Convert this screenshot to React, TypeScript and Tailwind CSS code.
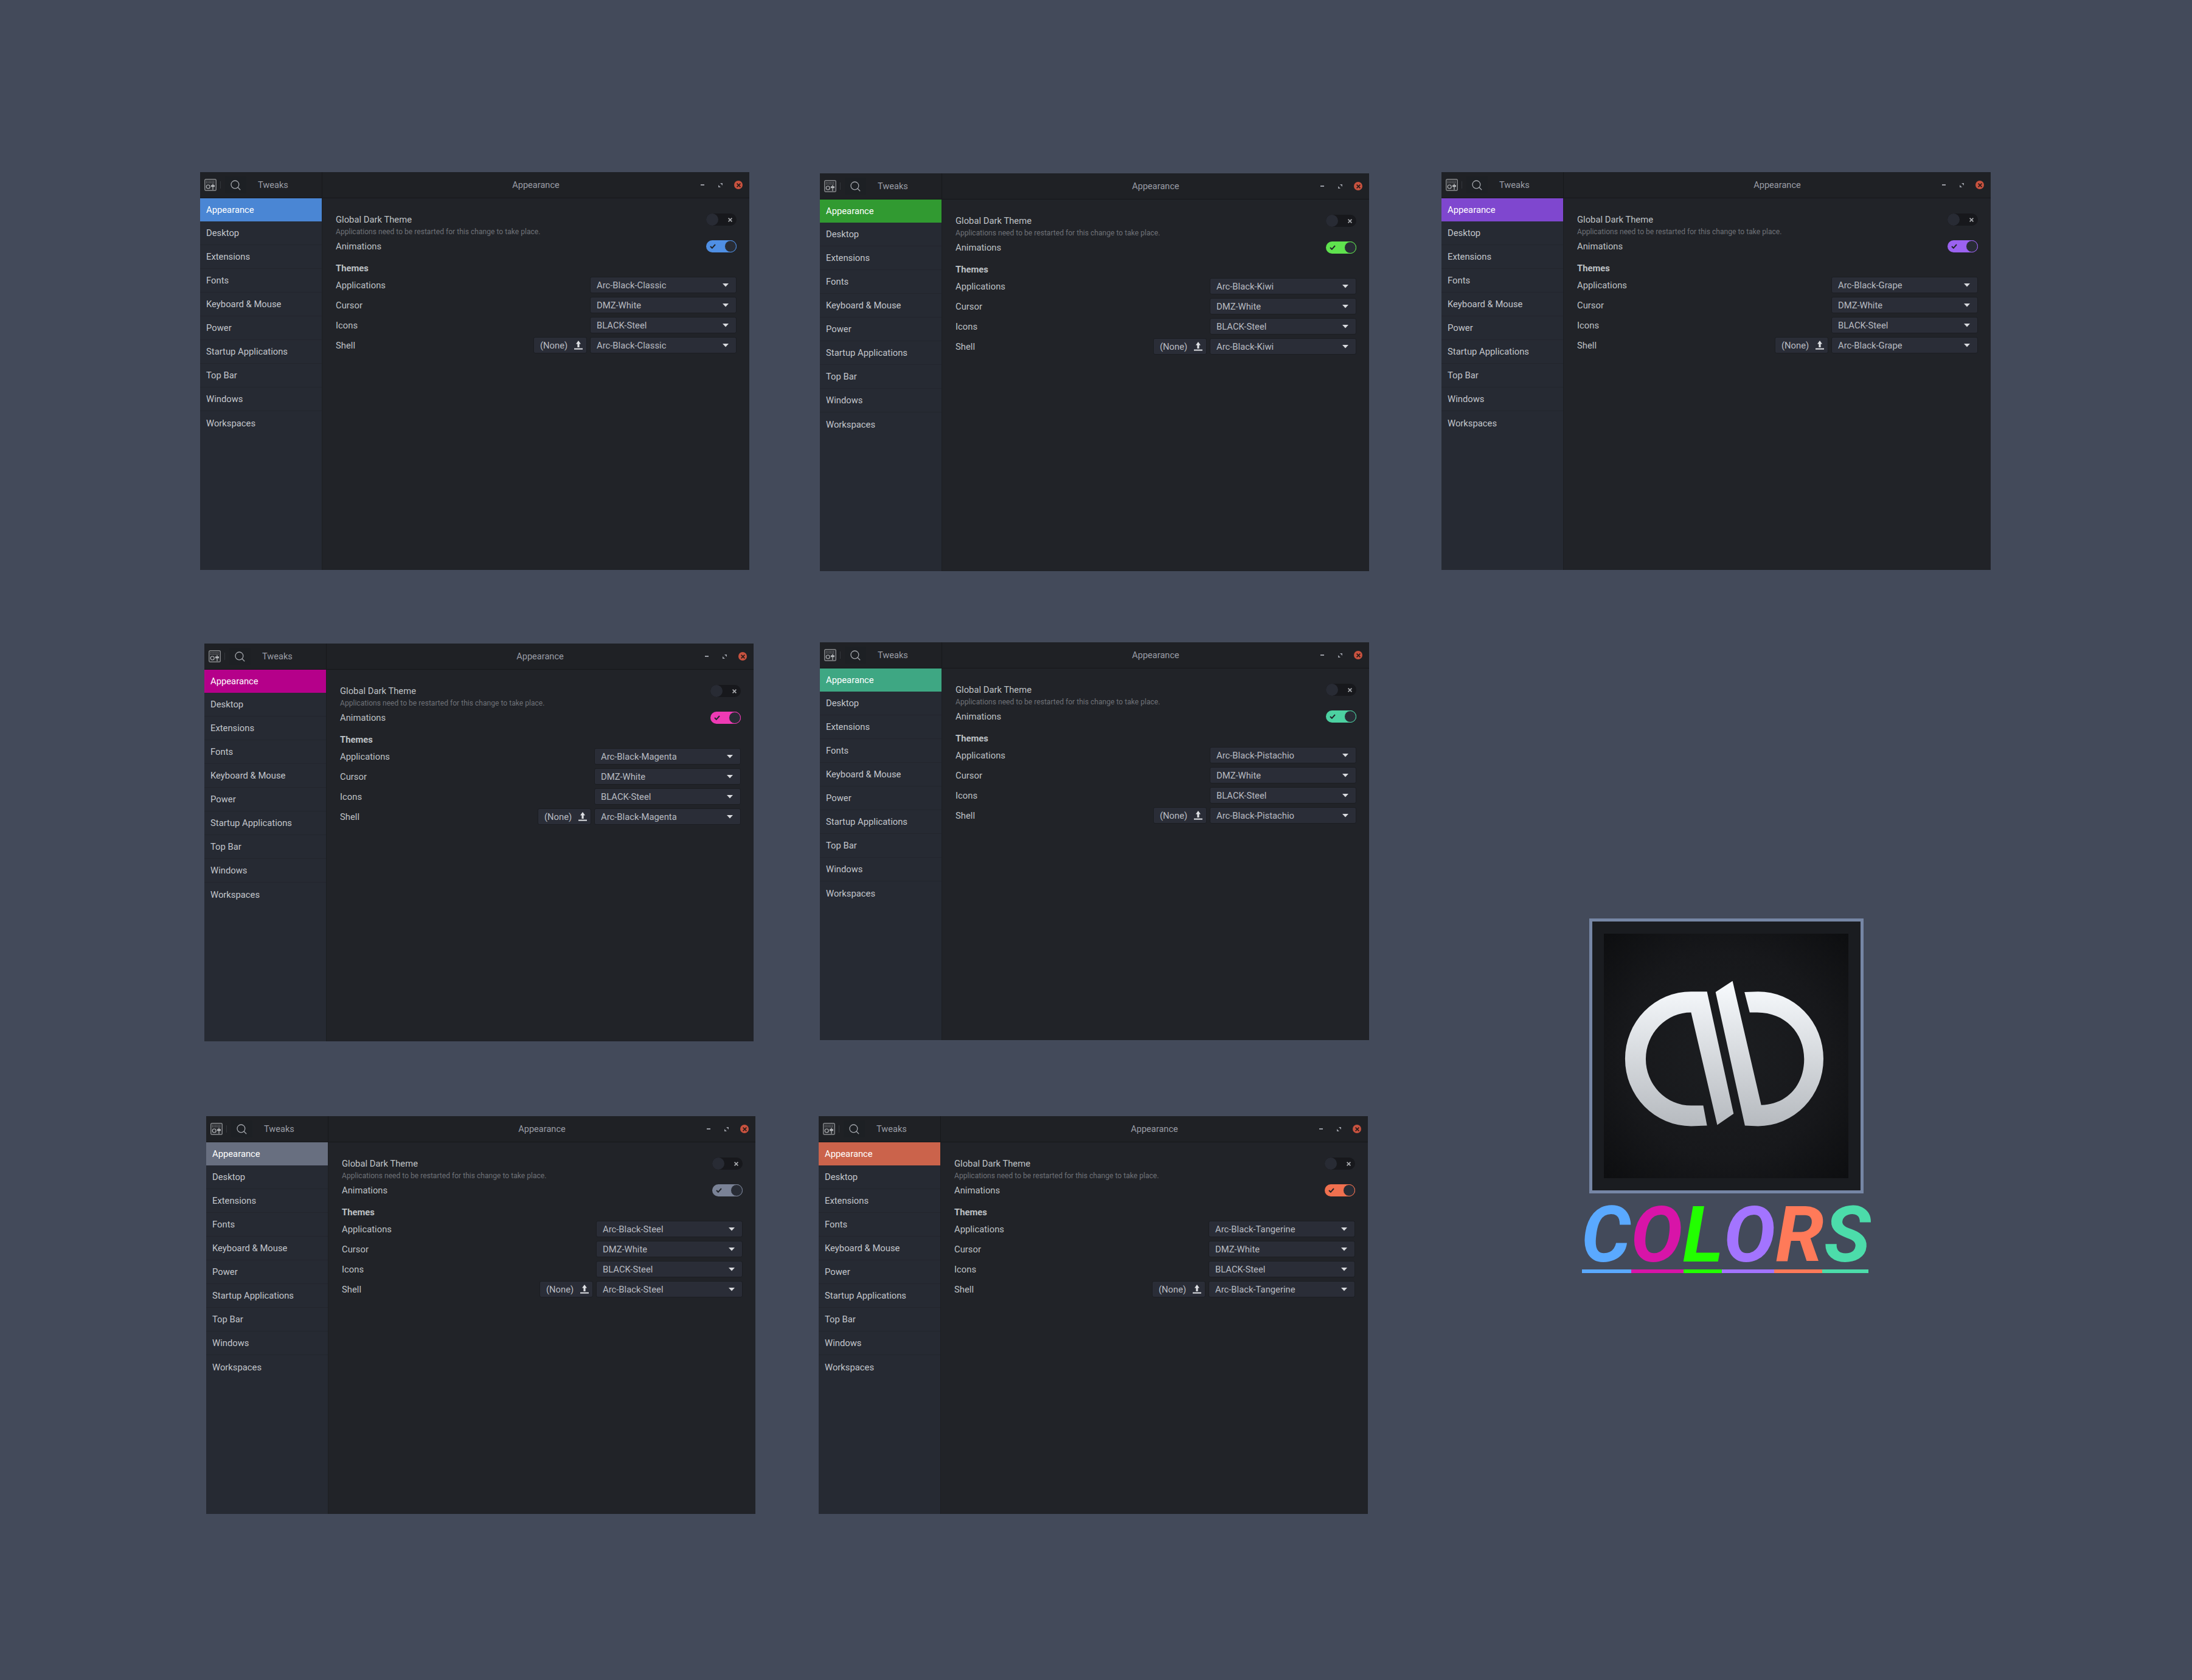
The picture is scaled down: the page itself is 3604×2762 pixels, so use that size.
import React from "react";

type Variant = {
  pos: string;
  theme: string;
  selected: string;
  toggle: string;
  knob: string;
};

const variants: Variant[] = [
  { pos: "left-[329px] top-[283px]", theme: "Arc-Black-Classic", selected: "bg-[#4a86d4]", toggle: "bg-[#4f8fe4]", knob: "border-[#4f8fe4]" },
  { pos: "left-[1348px] top-[285px]", theme: "Arc-Black-Kiwi", selected: "bg-[#319a31]", toggle: "bg-[#5fe24e]", knob: "border-[#5fe24e]" },
  { pos: "left-[2370px] top-[283px]", theme: "Arc-Black-Grape", selected: "bg-[#7f47cf]", toggle: "bg-[#9b62f0]", knob: "border-[#9b62f0]" },
  { pos: "left-[336px] top-[1058px]", theme: "Arc-Black-Magenta", selected: "bg-[#b5008a]", toggle: "bg-[#ee3ab4]", knob: "border-[#ee3ab4]" },
  { pos: "left-[1348px] top-[1056px]", theme: "Arc-Black-Pistachio", selected: "bg-[#3ea783]", toggle: "bg-[#4cd1a1]", knob: "border-[#4cd1a1]" },
  { pos: "left-[339px] top-[1835px]", theme: "Arc-Black-Steel", selected: "bg-[#686f80]", toggle: "bg-[#7a8296]", knob: "border-[#7a8296]" },
  { pos: "left-[1346px] top-[1835px]", theme: "Arc-Black-Tangerine", selected: "bg-[#cb634b]", toggle: "bg-[#f0704f]", knob: "border-[#f0704f]" },
];

const sections = [
  "Appearance",
  "Desktop",
  "Extensions",
  "Fonts",
  "Keyboard & Mouse",
  "Power",
  "Startup Applications",
  "Top Bar",
  "Windows",
  "Workspaces",
];

const wordmark = [
  { letter: "C", text: "text-[#5aa9ff]", bar: "bg-[#5aa9ff] w-[81px]" },
  { letter: "O", text: "text-[#d814a8]", bar: "bg-[#d814a8] w-[86px]" },
  { letter: "L", text: "text-[#22ff00]", bar: "bg-[#22ff00] w-[63px]" },
  { letter: "O", text: "text-[#a374ff]", bar: "bg-[#a374ff] w-[86px]" },
  { letter: "R", text: "text-[#ff7a59]", bar: "bg-[#ff7a59] w-[79px]" },
  { letter: "S", text: "text-[#4cdcaa]", bar: "bg-[#4cdcaa] w-[76px]" },
];

const TweaksIcon = () => (
  <svg width="20" height="20" viewBox="0 0 20 20" fill="none">
    <rect x="0.7" y="0.7" width="18.6" height="18.6" rx="2" fill="#2b2d31" stroke="#85878a" strokeWidth="1.4" />
    <path d="M3 4h14M3 6.5h14" stroke="#a5a7aa" strokeWidth="1.2" strokeDasharray="1 1.4" />
    <circle cx="6.2" cy="13" r="3" stroke="#b5b7ba" strokeWidth="1.2" />
    <path d="M14 8v10" stroke="#b5b7ba" strokeWidth="1.2" />
    <rect x="11" y="10.3" width="6" height="3" rx="0.6" fill="#b5b7ba" />
  </svg>
);

const SearchIcon = () => (
  <svg width="17" height="17" viewBox="0 0 17 17" fill="none" stroke="#a3a6ac" strokeWidth="1.3">
    <circle cx="7.4" cy="7.4" r="6.4" />
    <path d="M12 12l4.2 4.2" />
  </svg>
);

const Caret = () => (
  <svg width="10" height="6" viewBox="0 0 10 6" fill="#d8dade">
    <path d="M0 0h10L5 5.5z" />
  </svg>
);

const UploadIcon = () => (
  <svg width="14" height="15" viewBox="0 0 14 15" fill="#dfe1e5">
    <path d="M7 0l4 5.5H8.6V11H5.4V5.5H3z" />
    <rect y="12.6" width="14" height="2" />
  </svg>
);

const CheckIcon = () => (
  <svg width="10" height="8" viewBox="0 0 10 8" fill="none" stroke="#22252b" strokeWidth="2">
    <path d="M1 4l2.8 2.8L9 1" />
  </svg>
);

const CrossIcon = ({ color }: { color: string }) => (
  <svg width="7" height="7" viewBox="0 0 7 7" fill="none" stroke={color} strokeWidth="1.7">
    <path d="M0.6 0.6l5.8 5.8M6.4 0.6L0.6 6.4" />
  </svg>
);

const Combo = ({ value }: { value: string }) => (
  <div className="flex h-[27px] w-[241px] items-center justify-between rounded-[3px] border border-[#1b1d21] bg-[#2a2d37] pr-[12px] pl-[10px] text-[#b9bcc2]">
    <span>{value}</span>
    <Caret />
  </div>
);

const ThemeRow = ({ label, value, extra }: { label: string; value: string; extra?: boolean }) => (
  <div className="flex items-center justify-between">
    <span>{label}</span>
    <div className="flex items-center gap-[5px]">
      {extra && (
        <div className="flex h-[27px] w-[88px] items-center justify-between rounded-[3px] border border-[#1b1d21] bg-[#2a2d37] pr-[6px] pl-[10px] text-[#b9bcc2]">
          <span>(None)</span>
          <UploadIcon />
        </div>
      )}
      <Combo value={value} />
    </div>
  </div>
);

const TweaksWindow = ({ variant }: { variant: Variant }) => (
  <div
    className={`absolute flex h-[654px] w-[903px] flex-col bg-[#212328] font-['Roboto',sans-serif] text-[14.8px] leading-[20px] text-[#bfc2c6] ${variant.pos}`}
  >
    {/* Header */}
    <div className="flex h-[43px] shrink-0 border-b border-[#16171a] bg-[#1f2125] text-[14.6px] text-[#9a9da5]">
      <div className="flex w-[201px] shrink-0 items-center border-r border-[#17181b] pl-[7px]">
        <TweaksIcon />
        <div className="mr-[7px] ml-[6px] h-[12px] w-px bg-[#33363b]" />
        <div className="flex h-[28px] w-[35px] items-center justify-center rounded-[3px] bg-[#1d2024]">
          <SearchIcon />
        </div>
        <span className="ml-[19px]">Tweaks</span>
      </div>
      <div className="relative flex flex-1 items-center justify-center">
        <span>Appearance</span>
        <div className="absolute top-0 right-0 bottom-0 flex items-center pr-[11px]">
          <div className="mr-[23px] h-[2px] w-[6px] bg-[#9a9da5]" />
          <svg className="mr-[19px]" width="7" height="7" viewBox="0 0 7 7" fill="#9a9da5">
            <path d="M7 0v4L3 0zM0 7V3l4 4z" />
          </svg>
          <div className="flex h-[14px] w-[14px] items-center justify-center rounded-full bg-[#c8523f]">
            <CrossIcon color="#2a1c1a" />
          </div>
        </div>
      </div>
    </div>

    <div className="flex min-h-0 flex-1">
      {/* Sidebar */}
      <div className="w-[200px] shrink-0 bg-[#262a33]">
        {sections.map((name, i) => (
          <div
            key={name}
            className={
              i === 0
                ? `flex h-[38px] items-center pl-[10px] text-white ${variant.selected}`
                : "flex h-[39px] items-center border-b border-[#22252d] pl-[10px] text-[#c3c6cc] last:border-b-0"
            }
          >
            {name}
          </div>
        ))}
      </div>

      {/* Appearance page */}
      <div className="flex-1 border-l border-[#1c1e22] pt-[25px] pr-[21px] pl-[22px]">
        <div className="flex h-[20px] items-center justify-between">
          <span>Global Dark Theme</span>
          <div className="relative h-[20px] w-[50px] rounded-full bg-[#17181c]">
            <div className="absolute top-0 left-0 h-[20px] w-[20px] rounded-full bg-[#282b34]" />
            <div className="absolute top-[6.5px] right-[7px] flex">
              <CrossIcon color="#a8aaae" />
            </div>
          </div>
        </div>
        <div className="h-[20px] text-[12.1px] text-[#6e7177]">
          Applications need to be restarted for this change to take place.
        </div>
        <div className="mt-[4px] flex h-[20px] items-center justify-between">
          <span>Animations</span>
          <div className={`relative h-[20px] w-[50px] rounded-full ${variant.toggle}`}>
            <div className="absolute top-[6px] left-[6px] flex">
              <CheckIcon />
            </div>
            <div className={`absolute top-0 right-0 h-[20px] w-[20px] rounded-full border bg-[#282c35] ${variant.knob}`} />
          </div>
        </div>
        <div className="mt-[16px] font-bold">Themes</div>
        <div className="mt-[4px] flex flex-col gap-[6px]">
          <ThemeRow label="Applications" value={variant.theme} />
          <ThemeRow label="Cursor" value="DMZ-White" />
          <ThemeRow label="Icons" value="BLACK-Steel" />
          <ThemeRow label="Shell" value={variant.theme} extra />
        </div>
      </div>
    </div>
  </div>
);

const Logo = () => (
  <div className="absolute top-[1510px] left-[2601px] flex w-[473px] flex-col items-center">
    <div className="ml-[-1px] flex h-[452px] w-[451px] translate-x-[1px] items-center justify-center border-[5px] border-[#7686a5] bg-[#1a1c20]">
      <div className="h-[402px] w-[402px] bg-[radial-gradient(circle,#1c1e21_0%,#17181b_60%,#0d0e10_100%)]">
        <svg width="402" height="402" viewBox="0 0 402 402">
          <defs>
            <linearGradient id="metal" x1="0" y1="78" x2="0" y2="316" gradientUnits="userSpaceOnUse">
              <stop offset="0" stopColor="#f8fbfe" />
              <stop offset="1" stopColor="#b6babf" />
            </linearGradient>
            <filter id="soft">
              <feGaussianBlur stdDeviation="0.7" />
            </filter>
          </defs>
          <g filter="url(#soft)">
            <path
              fill="url(#metal)"
              d="M169.6 95.2L213.3 296L186.4 314.4L143.4 129.5A74.4 76.5 0 0 0 143.4 282.6L163.4 282.6L169.6 315.6L143.4 316.4A108.5 110.6 0 0 1 143.4 95.2Z"
            />
            <path
              fill="url(#metal)"
              d="M231.9 315.6L183.7 96L211.6 77.7L258.7 281.7C300 281 329.3 250 329.3 206.2C329.3 163 298 129.5 252 129.5L239.8 129.5L231.2 96L253.6 95.2A107.4 110.6 0 0 1 253.6 316.4Z"
            />
          </g>
        </svg>
      </div>
    </div>
    <div className="mt-[11px] flex h-[114px] w-[471px] items-center justify-center font-['Roboto',sans-serif] text-[128px] leading-[114px] font-bold italic">
      {wordmark.map((item, i) => (
        <span key={i} className={item.text}>
          {item.letter}
        </span>
      ))}
    </div>
    <div className="flex h-[6px] w-[471px] self-start">
      {wordmark.map((item, i) => (
        <div key={i} className={item.bar} />
      ))}
    </div>
  </div>
);

export default function App() {
  return (
    <div className="relative h-[2762px] w-[3604px] overflow-hidden bg-[#434a5a]">
      {variants.map((variant) => (
        <TweaksWindow key={variant.theme} variant={variant} />
      ))}
      <Logo />
    </div>
  );
}
